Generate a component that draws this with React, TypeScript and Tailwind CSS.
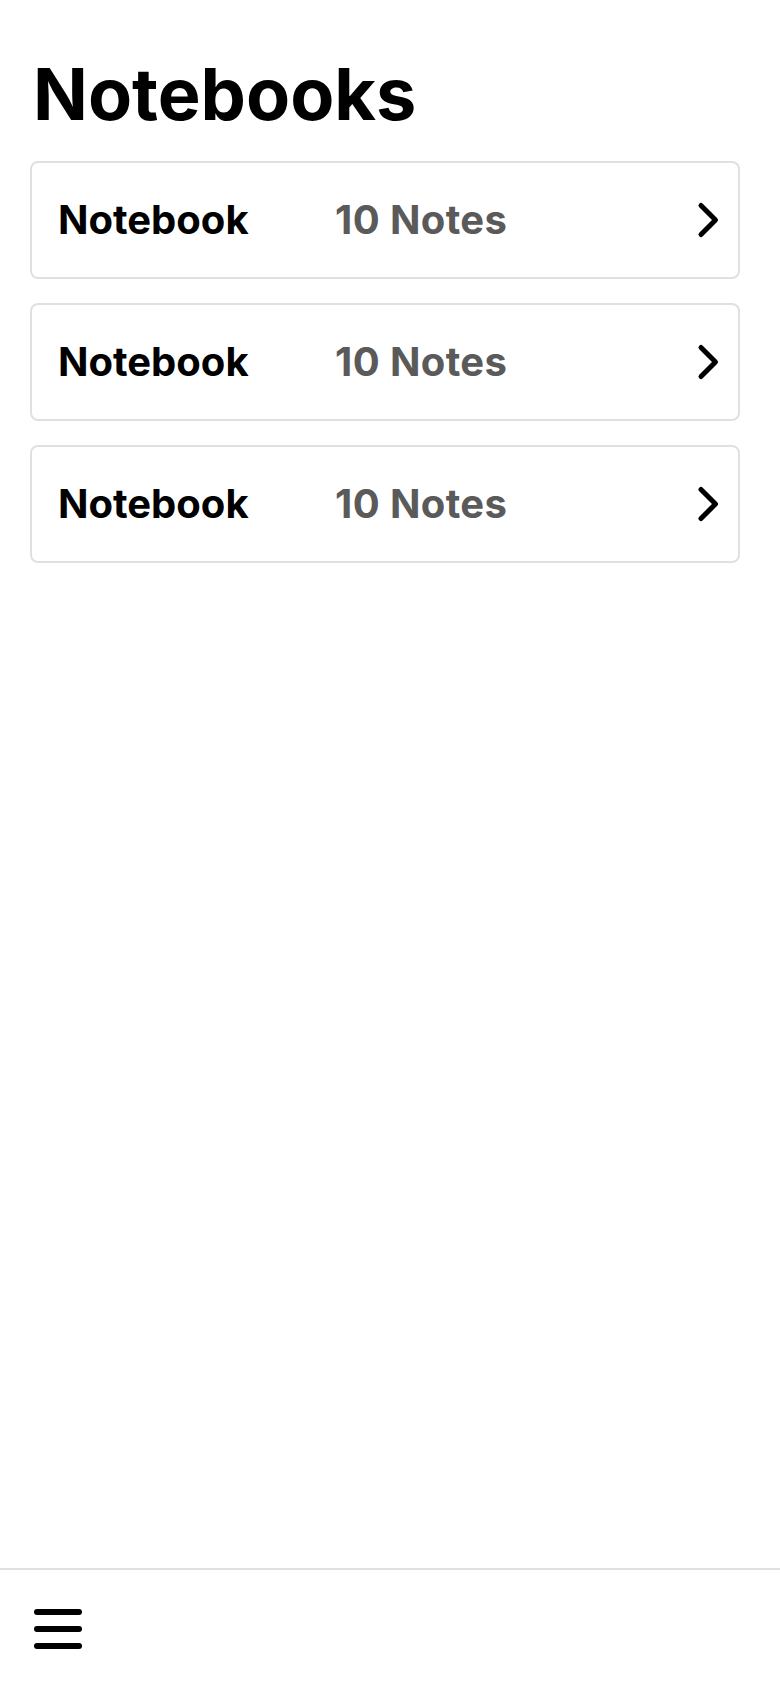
import React from "react";

function Chevron() {
  return (
    <svg width="24" height="40" viewBox="0 0 24 40" fill="none" className="shrink-0">
      <polyline
        points="4,5.5 18.5,20 4,34.5"
        stroke="#000"
        strokeWidth="5"
        strokeLinecap="round"
        strokeLinejoin="round"
      />
    </svg>
  );
}

function Hamburger() {
  return (
    <svg width="52" height="48" viewBox="0 0 52 48" fill="none">
      <line x1="5" y1="7" x2="47" y2="7" stroke="#000" strokeWidth="6" strokeLinecap="round" />
      <line x1="5" y1="24" x2="47" y2="24" stroke="#000" strokeWidth="6" strokeLinecap="round" />
      <line x1="5" y1="41" x2="47" y2="41" stroke="#000" strokeWidth="6" strokeLinecap="round" />
    </svg>
  );
}

function NotebookCard() {
  return (
    <div className="flex h-[118px] items-center rounded-[8px] border-2 border-[#e0e0e0] bg-white pl-[26px] pr-[17px]">
      <div className="w-[277px] shrink-0 text-[40px] font-bold leading-none text-black">Notebook</div>
      <div className="flex-1 text-[40px] font-bold leading-none tracking-[0.4px] text-[#5a5a5a]">10 Notes</div>
      <Chevron />
    </div>
  );
}

export default function App() {
  return (
    <div
      className="flex min-h-screen flex-col bg-white"
      style={{ fontFamily: "Inter, 'Noto Sans', sans-serif" }}
    >
      <main className="flex-1 px-[30px] pt-[58px]">
        <h1 className="pl-[3px] text-[72px] font-bold leading-none text-black">Notebooks</h1>
        <div className="mt-[31px] mr-[10px] flex flex-col gap-[24px]">
          <NotebookCard />
          <NotebookCard />
          <NotebookCard />
        </div>
      </main>
      <footer className="flex h-[120px] items-center border-t-2 border-[#e0e0e0] pl-[32px]">
        <Hamburger />
      </footer>
    </div>
  );
}
